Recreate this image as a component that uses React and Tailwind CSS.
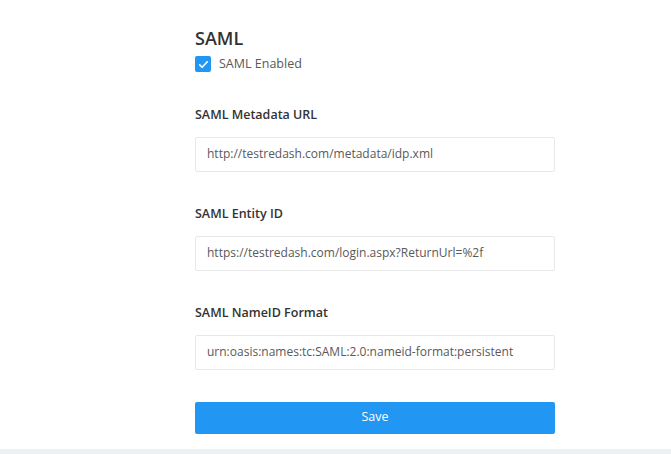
import React, { useState } from 'react';

const fields = [
  { label: 'SAML Metadata URL', value: 'http://testredash.com/metadata/idp.xml' },
  { label: 'SAML Entity ID', value: 'https://testredash.com/login.aspx?ReturnUrl=%2f' },
  { label: 'SAML NameID Format', value: 'urn:oasis:names:tc:SAML:2.0:nameid-format:persistent' },
];

const App = () => {
  const [enabled, setEnabled] = useState(true);

  return (
    <div className="w-[671px] h-[454px] flex flex-col bg-white font-['Open_Sans',sans-serif]">
      <div className="flex-1 pl-[195px] pt-[26px]">
        <div className="w-[360px]">
          <h2 className="text-[18px] font-semibold leading-[24px] text-[#323232]">SAML</h2>

          {/* Enabled toggle */}
          <label className="flex items-center mt-[5px] cursor-pointer">
            <span
              onClick={() => setEnabled(!enabled)}
              className="w-4 h-4 rounded-[2px] bg-[#2196f3] flex items-center justify-center"
            >
              {enabled && (
                <svg viewBox="0 0 16 16" className="w-[11px] h-[11px]" fill="none">
                  <path d="M2.5 8.5l3.5 3.5 7.5-8" stroke="white" strokeWidth="2.4" strokeLinecap="round" strokeLinejoin="round" />
                </svg>
              )}
            </span>
            <span className="ml-[8px] text-[12.5px] text-[#595959]">SAML Enabled</span>
          </label>

          {fields.map((f, i) => (
            <div key={f.label} className={i === 0 ? 'mt-[32px]' : 'mt-[33px]'}>
              <div className="text-[12.5px] font-semibold text-[#333] leading-[18px]">{f.label}</div>
              <div className="mt-[13px] h-[35px] border border-[#e8e8e8] rounded-[2px] px-[11px] flex items-center text-[12px] text-[#595959]">
                {f.value}
              </div>
            </div>
          ))}

          <button className="mt-[32px] w-full h-[32px] rounded-[2px] bg-[#2196f3] text-white text-[12.5px]">
            Save
          </button>
        </div>
      </div>
      <div className="h-[5px] bg-[#edf1f5]" />
    </div>
  );
};

export default App;
